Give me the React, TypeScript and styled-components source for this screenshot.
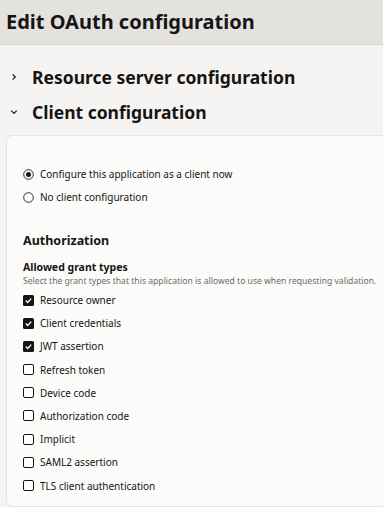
import styled, { createGlobalStyle } from 'styled-components';

const GlobalStyle = createGlobalStyle`
  html, body {
    margin: 0;
    padding: 0;
    background: #f5f4f2;
    font-family: 'Noto Sans', 'Open Sans', sans-serif;
    color: #161513;
    overflow: hidden;
  }
`;

const grantTypes = [
  { label: 'Resource owner', checked: true },
  { label: 'Client credentials', checked: true },
  { label: 'JWT assertion', checked: true },
  { label: 'Refresh token', checked: false },
  { label: 'Device code', checked: false },
  { label: 'Authorization code', checked: false },
  { label: 'Implicit', checked: false },
  { label: 'SAML2 assertion', checked: false },
  { label: 'TLS client authentication', checked: false },
];

const App = () => {
  return (
    <>
      <GlobalStyle />
      <Page>
        <Header>
          <h1 className="title">Edit OAuth configuration</h1>
        </Header>
        <Sections>
          <SectionToggle>
            <Chevron open={false} />
            <span>Resource server configuration</span>
          </SectionToggle>
          <SectionToggle>
            <Chevron open />
            <span>Client configuration</span>
          </SectionToggle>
        </Sections>
        <Card>
          <RadioGroup>
            <Option>
              <Radio checked />
              <span>Configure this application as a client now</span>
            </Option>
            <Option>
              <Radio checked={false} />
              <span>No client configuration</span>
            </Option>
          </RadioGroup>
          <GroupTitle>Authorization</GroupTitle>
          <FieldLabel>Allowed grant types</FieldLabel>
          <FieldHelp>
            Select the grant types that this application is allowed to use when requesting validation.
          </FieldHelp>
          <CheckList>
            {grantTypes.map((g) => (
              <Option key={g.label}>
                <Checkbox checked={g.checked} />
                <span>{g.label}</span>
              </Option>
            ))}
          </CheckList>
        </Card>
      </Page>
    </>
  );
};

const Chevron = ({ open }: { open: boolean }) => (
  <ChevronBox>
    <svg width="8" height="8" viewBox="0 0 8 8">
      {open ? (
        <path d="M1.3 2.6 L4 5.3 L6.7 2.6" fill="none" stroke="#161513" strokeWidth="1.2" />
      ) : (
        <path d="M2.6 1.3 L5.3 4 L2.6 6.7" fill="none" stroke="#161513" strokeWidth="1.2" />
      )}
    </svg>
  </ChevronBox>
);

const Radio = ({ checked }: { checked: boolean }) => (
  <svg width="11" height="11" viewBox="0 0 11 11">
    <circle cx="5.5" cy="5.5" r="4.8" fill="#fff" stroke="#161513" strokeWidth="0.9" />
    {checked && <circle cx="5.5" cy="5.5" r="2.5" fill="#161513" />}
  </svg>
);

const Checkbox = ({ checked }: { checked: boolean }) => (
  <svg width="11" height="11" viewBox="0 0 11 11">
    {checked ? (
      <>
        <rect x="0" y="0" width="11" height="11" rx="1.5" fill="#161513" />
        <path d="M2.8 5.6 L4.7 7.4 L8.2 3.6" fill="none" stroke="#fff" strokeWidth="1.4" />
      </>
    ) : (
      <rect x="0.5" y="0.5" width="10" height="10" rx="1.5" fill="#fff" stroke="#161513" strokeWidth="1" />
    )}
  </svg>
);

const Page = styled.div`
  width: 383px;
  height: 507px;
  display: flex;
  flex-direction: column;
`;

const Header = styled.header`
  height: 45px;
  background: #e4e2de;
  border-bottom: 1px solid #d4d2cd;
  display: flex;
  align-items: center;
  padding: 0 6px 2px;
  box-sizing: border-box;

  .title {
    margin: 0;
    font-size: 20px;
    font-weight: 700;
    letter-spacing: 0;
  }
`;

const Sections = styled.div`
  display: flex;
  flex-direction: column;
  padding: 20px 0 0 8px;
  gap: 11px;
`;

const SectionToggle = styled.div`
  display: flex;
  align-items: center;
  gap: 12px;
  font-size: 17.5px;
  font-weight: 700;
  line-height: 24px;
`;

const ChevronBox = styled.span`
  width: 12px;
  display: flex;
  justify-content: center;
`;

const Card = styled.section`
  margin: 11px 0 0 6px;
  flex: 1;
  background: #fbfbfa;
  border: 1px solid #e6e4e0;
  border-right: none;
  border-radius: 6px 0 0 6px;
  padding: 31px 0 0 16px;
`;

const RadioGroup = styled.div`
  display: flex;
  flex-direction: column;
  gap: 9px;
`;

const Option = styled.label`
  display: flex;
  align-items: center;
  gap: 6px;
  font-size: 10px;
  line-height: 14px;
  white-space: nowrap;
`;

const GroupTitle = styled.h2`
  margin: 29px 0 0;
  font-size: 12.5px;
  font-weight: 700;
  line-height: 16px;
`;

const FieldLabel = styled.div`
  margin-top: 12px;
  font-size: 10.5px;
  font-weight: 700;
  line-height: 13px;
`;

const FieldHelp = styled.div`
  margin-top: 1px;
  font-size: 8.6px;
  line-height: 13px;
  color: #6f6c67;
  white-space: nowrap;
`;

const CheckList = styled.div`
  display: flex;
  flex-direction: column;
  gap: 9.2px;
  margin-top: 5px;
`;

export default App;
